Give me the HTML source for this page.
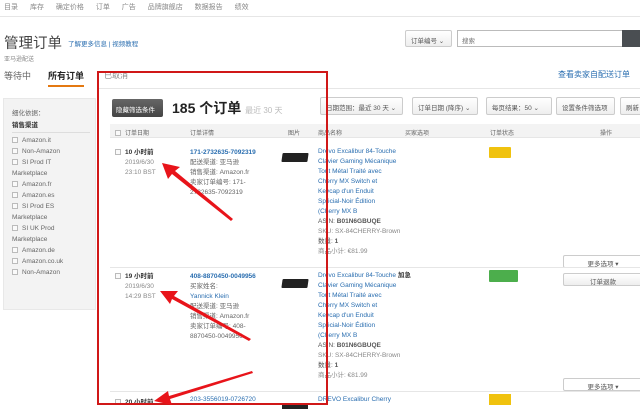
<!DOCTYPE html>
<html><head><meta charset="utf-8"><style>
*{margin:0;padding:0;box-sizing:border-box}
body{width:640px;height:409px;overflow:hidden;background:#fff;position:relative;font-family:"Liberation Sans","Noto Sans CJK SC",sans-serif;color:#333;font-size:7px}
.a{position:absolute;white-space:nowrap}
.g{color:#888}.b{color:#2a6eb0}.k{font-weight:bold}
.dd{position:absolute;border:1px solid #ccc;border-radius:2px;background:linear-gradient(#fff,#eee);font-size:6.5px;color:#555;padding:4px 5px;height:18px}
.cb{display:inline-block;width:6px;height:6px;border:1px solid #bbb;margin-right:4px;vertical-align:-1px;background:#fafafa}
.pl div{height:10px;line-height:10px}
</style></head><body>
<div class="a g" style="left:4px;top:2px;font-size:7px;word-spacing:10px">目录 库存 确定价格 订单 广告 品牌旗舰店 数据报告 绩效</div>
<div class="a" style="left:0;top:16px;width:640px;height:1px;background:#e6e6e6"></div>
<div class="a" style="left:4px;top:32px;font-size:14.5px;color:#444">管理订单</div>
<div class="a b" style="left:68px;top:38px;font-size:6.5px">了解更多信息 | 视频教程</div>
<div class="a g" style="left:4px;top:54px;font-size:6px">亚马逊配送</div>
<div class="a" style="left:4px;top:69px;font-size:9px;color:#666">等待中</div>
<div class="a k" style="left:48px;top:69px;font-size:9px;color:#222">所有订单</div>
<div class="a" style="left:48px;top:85px;width:36px;height:2px;background:#e47911"></div>
<div class="a g" style="left:104px;top:70px;font-size:8px">已取消</div>
<div class="a" style="left:98px;top:88px;width:542px;height:1px;background:#e6e6e6"></div>
<div class="a b" style="left:558px;top:69px;font-size:8px">查看卖家自配送订单</div>
<div class="dd" style="left:405px;top:30px;width:47px;height:17px">订单编号 ⌄</div>
<div class="a" style="left:457px;top:30px;width:166px;height:17px;border:1px solid #bbb;font-size:6.5px;padding:4px;color:#777">搜索</div>
<div class="a" style="left:622px;top:30px;width:18px;height:17px;background:#4a4e52"></div>
<div class="a" style="left:3px;top:98px;width:93px;height:212px;background:#f3f3f3;border:1px solid #e8e8e8"></div>
<div class="a" style="left:12px;top:108px;font-size:6.5px;line-height:12px;color:#666">
<div>细化依据：</div><div class="k" style="color:#333;border-bottom:1px solid #ddd;margin-bottom:2px;width:78px">销售渠道</div>
<div style="line-height:11px">
<div><span class="cb"></span>Amazon.it</div><div><span class="cb"></span>Non-Amazon</div><div><span class="cb"></span>SI Prod IT</div><div>Marketplace</div><div><span class="cb"></span>Amazon.fr</div><div><span class="cb"></span>Amazon.es</div><div><span class="cb"></span>SI Prod ES</div><div>Marketplace</div><div><span class="cb"></span>SI UK Prod</div><div>Marketplace</div><div><span class="cb"></span>Amazon.de</div><div><span class="cb"></span>Amazon.co.uk</div><div><span class="cb"></span>Non-Amazon</div></div></div>
<div class="a" style="left:112px;top:99px;width:51px;height:18px;background:linear-gradient(#666,#444);border-radius:2px;color:#fff;font-size:6.5px;padding:5px 4px" >隐藏筛选条件</div>
<div class="a k" style="left:172px;top:98px;font-size:14px;color:#222">185 个订单 <span style="font-size:8px;color:#bbb;font-weight:normal">最近 30 天</span></div>
<div class="dd" style="left:320px;top:97px;width:83px">日期范围：最近 30 天 ⌄</div>
<div class="dd" style="left:412px;top:97px;width:66px">订单日期 (降序) ⌄</div>
<div class="dd" style="left:486px;top:97px;width:66px">每页结果：50 ⌄</div>
<div class="dd" style="left:556px;top:97px;width:59px">设置条件筛选项</div>
<div class="dd" style="left:620px;top:97px;width:30px">刷新</div>
<div class="a" style="left:110px;top:124px;width:530px;height:14px;background:#f3f3f3;border-bottom:1px solid #e6e6e6"></div>
<div class="a g" style="left:115px;top:128px;font-size:6px;color:#666"><span class="cb"></span>订单日期</div>
<div class="a" style="left:190px;top:128px;font-size:6px;color:#666">订单详情</div>
<div class="a" style="left:288px;top:128px;font-size:6px;color:#666">图片</div>
<div class="a" style="left:318px;top:128px;font-size:6px;color:#666">商品名称</div>
<div class="a" style="left:405px;top:128px;font-size:6px;color:#666">买家选项</div>
<div class="a" style="left:490px;top:128px;font-size:6px;color:#666">订单状态</div>
<div class="a" style="left:600px;top:128px;font-size:6px;color:#666">操作</div>
<!-- row1 -->
<div class="a" style="left:115px;top:148px;line-height:10px;font-size:6.5px"><span class="cb"></span><b>10 小时前</b><div class="g" style="padding-left:10px">2019/6/30</div><div class="g" style="padding-left:10px">23:10 BST</div></div>
<div class="a" style="left:190px;top:148px;line-height:10px;font-size:6.5px;color:#666"><div class="b k">171-2732635-7092319</div><div>配送渠道: 亚马逊</div><div>销售渠道: Amazon.fr</div><div>卖家订单编号: 171-</div><div>2732635-7092319</div></div>
<div class="a" style="left:282px;top:153px;width:26px;height:9px;background:#222;border-radius:1px;transform:skewX(-8deg)"></div>
<div class="a pl" style="left:318px;top:147px;font-size:6.5px;color:#555"><div class="b">Drevo Excalibur 84-Touche</div><div class="b">Clavier Gaming Mécanique</div><div class="b">Tout Métal Traité avec</div><div class="b">Cherry MX Switch et</div><div class="b">Keycap d'un Enduit</div><div class="b">Spécial-Noir Édition</div><div class="b">(Cherry MX B</div><div>ASIN: <b>B01N6GBUQE</b></div><div class="g">SKU: SX-84CHERRY-Brown</div><div>数量: <b>1</b></div><div class="g">商品小计: €81.99</div></div>
<div class="a" style="left:489px;top:147px;width:22px;height:11px;background:#f0c20e;border-radius:1px"></div>
<div class="dd" style="left:563px;top:255px;width:80px;height:13px;padding:2px;text-align:center;background:#fff">更多选项 ▾</div>
<div class="a" style="left:110px;top:267px;width:530px;height:1px;background:#e6e6e6"></div>
<!-- row2 -->
<div class="a" style="left:115px;top:272px;line-height:10px;font-size:6.5px"><span class="cb"></span><b>19 小时前</b><div class="g" style="padding-left:10px">2019/6/30</div><div class="g" style="padding-left:10px">14:29 BST</div></div>
<div class="a" style="left:190px;top:272px;line-height:10px;font-size:6.5px;color:#666"><div class="b k">408-8870450-0049956</div><div>买家姓名:</div><div class="b">Yannick Klein</div><div>配送渠道: 亚马逊</div><div>销售渠道: Amazon.fr</div><div>卖家订单编号: 408-</div><div>8870450-0049956</div></div>
<div class="a" style="left:282px;top:279px;width:26px;height:9px;background:#222;border-radius:1px;transform:skewX(-8deg)"></div>
<div class="a pl" style="left:318px;top:271px;font-size:6.5px;color:#555"><div class="b">Drevo Excalibur 84-Touche <b style="color:#333">加急</b></div><div class="b">Clavier Gaming Mécanique</div><div class="b">Tout Métal Traité avec</div><div class="b">Cherry MX Switch et</div><div class="b">Keycap d'un Enduit</div><div class="b">Spécial-Noir Édition</div><div class="b">(Cherry MX B</div><div>ASIN: <b>B01N6GBUQE</b></div><div class="g">SKU: SX-84CHERRY-Brown</div><div>数量: <b>1</b></div><div class="g">商品小计: €81.99</div></div>
<div class="a" style="left:489px;top:270px;width:29px;height:12px;background:#4cae4c;border-radius:1px"></div>
<div class="dd" style="left:563px;top:273px;width:80px;height:13px;padding:2px;text-align:center">订单退款</div>
<div class="dd" style="left:563px;top:378px;width:80px;height:13px;padding:2px;text-align:center;background:#fff">更多选项 ▾</div>
<div class="a" style="left:110px;top:391px;width:530px;height:1px;background:#e6e6e6"></div>
<!-- row3 -->
<div class="a" style="left:115px;top:396px;font-size:6.5px"><span class="cb"></span><b>20 小时前</b></div>
<div class="a b" style="left:190px;top:396px;font-size:6.5px">203-3556019-0726720</div>
<div class="a b" style="left:318px;top:396px;font-size:6.5px">DREVO Excalibur Cherry</div>
<div class="a" style="left:489px;top:394px;width:22px;height:11px;background:#f0c20e"></div>
<div class="a" style="left:282px;top:403px;width:26px;height:6px;background:#222"></div>
<!-- red box & arrows -->
<div class="a" style="left:97px;top:71px;width:231px;height:334px;border:2px solid #d01818"></div>
<svg class="a" style="left:0;top:0" width="640" height="409">
<g fill="#e8141a">
<polygon points="162,163 180,167 175,171 233,219 231,221 172,174 168,179"/>
<polygon points="160,291 178,291 174,296 251,339 249,341 172,299 170,304"/>
<polygon points="154,401 168,391 169,396 252,371 253,373 170,399 172,405"/>
</g></svg>
</body></html>
